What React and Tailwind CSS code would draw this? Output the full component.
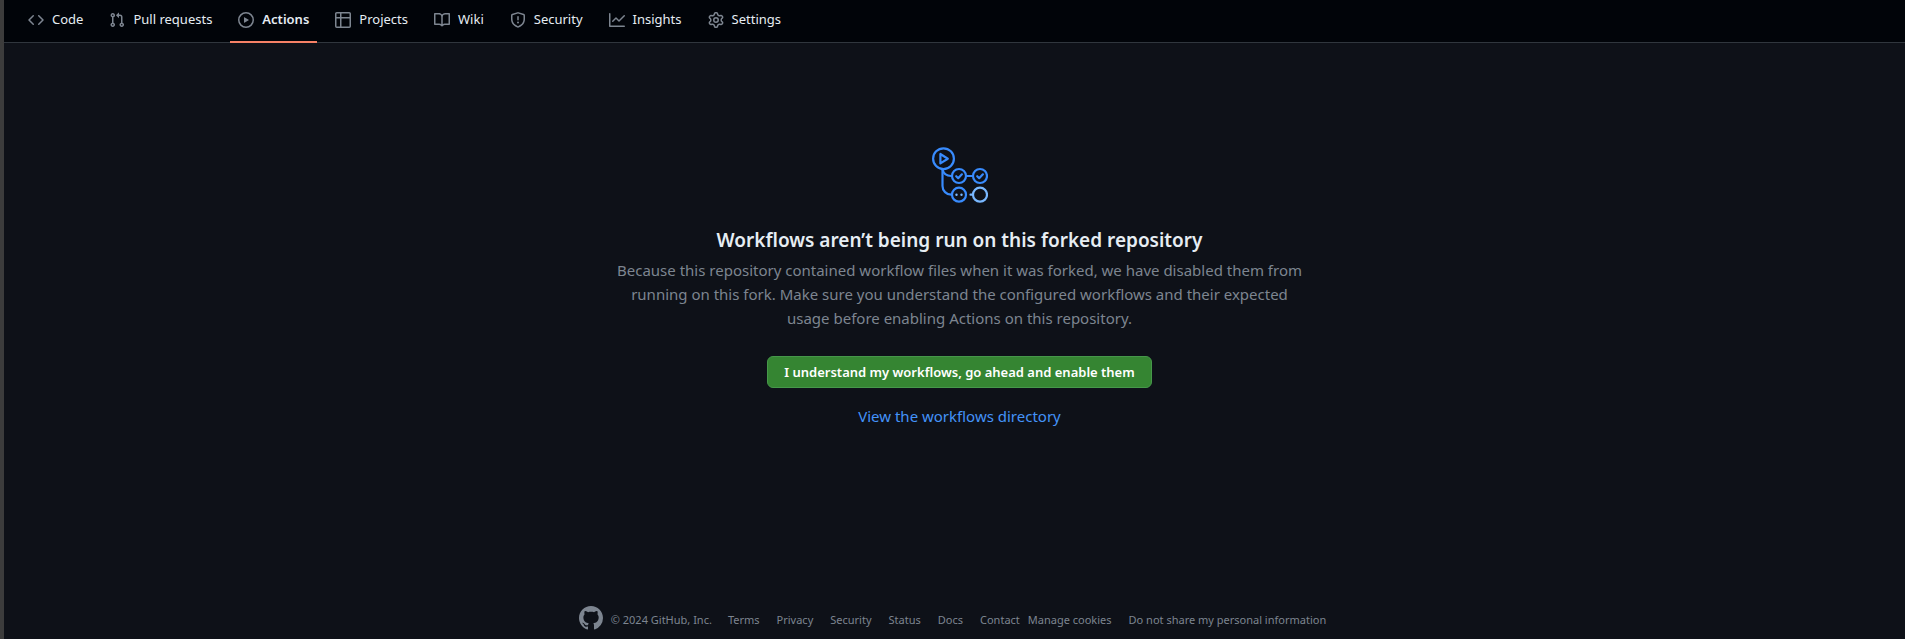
const NAV = [
  { label: "Code", d: "m11.28 3.22 4.25 4.25a.75.75 0 0 1 0 1.06l-4.25 4.25a.749.749 0 0 1-1.275-.326.749.749 0 0 1 .215-.734L13.94 8l-3.72-3.72a.749.749 0 0 1 .326-1.275.749.749 0 0 1 .734.215Zm-6.56 0a.751.751 0 0 1 1.042.018.751.751 0 0 1 .018 1.042L2.06 8l3.72 3.72a.749.749 0 0 1-.326 1.275.749.749 0 0 1-.734-.215L.47 8.53a.75.75 0 0 1 0-1.06Z" },
  { label: "Pull requests", d: "M1.5 3.25a2.25 2.25 0 1 1 3 2.122v5.256a2.251 2.251 0 1 1-1.5 0V5.372A2.25 2.25 0 0 1 1.5 3.25Zm5.677-.177L9.573.677A.25.25 0 0 1 10 .854V2.5h1A2.5 2.5 0 0 1 13.5 5v5.628a2.251 2.251 0 1 1-1.5 0V5a1 1 0 0 0-1-1h-1v1.646a.25.25 0 0 1-.427.177L7.177 3.427a.25.25 0 0 1 0-.354ZM3.75 2.5a.75.75 0 1 0 0 1.5.75.75 0 0 0 0-1.5Zm0 9.5a.75.75 0 1 0 0 1.5.75.75 0 0 0 0-1.5Zm8.25.75a.75.75 0 1 0 1.5 0 .75.75 0 0 0-1.5 0Z" },
  { label: "Actions", active: true, d: "M8 0a8 8 0 1 1 0 16A8 8 0 0 1 8 0ZM1.5 8a6.5 6.5 0 1 0 13 0 6.5 6.5 0 0 0-13 0Zm4.879-2.773 4.264 2.559a.25.25 0 0 1 0 .428l-4.264 2.559A.25.25 0 0 1 6 10.559V5.442a.25.25 0 0 1 .379-.215Z" },
  { label: "Projects", d: "M0 1.75C0 .784.784 0 1.75 0h12.5C15.216 0 16 .784 16 1.75v12.5A1.75 1.75 0 0 1 14.25 16H1.75A1.75 1.75 0 0 1 0 14.25ZM6.5 6.5v8h7.75a.25.25 0 0 0 .25-.25V6.5Zm8-1.5V1.75a.25.25 0 0 0-.25-.25H6.5V5Zm-13 1.5v7.75c0 .138.112.25.25.25H5v-8ZM5 5V1.5H1.75a.25.25 0 0 0-.25.25V5Z" },
  { label: "Wiki", d: "M0 1.75A.75.75 0 0 1 .75 1h4.253c1.227 0 2.317.59 3 1.501A3.743 3.743 0 0 1 11.006 1h4.245a.75.75 0 0 1 .75.75v10.5a.75.75 0 0 1-.75.75h-4.507a2.25 2.25 0 0 0-1.591.659l-.622.621a.75.75 0 0 1-1.06 0l-.622-.621A2.25 2.25 0 0 0 5.258 13H.75a.75.75 0 0 1-.75-.75Zm7.251 10.324.004-5.073-.002-2.253A2.25 2.25 0 0 0 5.003 2.5H1.5v9h3.757a3.75 3.75 0 0 1 1.994.574ZM8.755 4.75l-.004 7.322a3.752 3.752 0 0 1 1.992-.572H14.5v-9h-3.495a2.25 2.25 0 0 0-2.25 2.25Z" },
  { label: "Security", d: "M7.467.133a1.748 1.748 0 0 1 1.066 0l5.25 1.68A1.75 1.75 0 0 1 15 3.48V7c0 1.566-.32 3.182-1.303 4.682-.983 1.498-2.585 2.813-5.032 3.855a1.697 1.697 0 0 1-1.33 0c-2.447-1.042-4.049-2.357-5.032-3.855C1.32 10.182 1 8.566 1 7V3.48a1.75 1.75 0 0 1 1.217-1.667Zm.61 1.429a.25.25 0 0 0-.153 0l-5.25 1.68a.25.25 0 0 0-.174.238V7c0 1.358.275 2.666 1.057 3.86.784 1.194 2.121 2.34 4.366 3.297a.196.196 0 0 0 .154 0c2.245-.956 3.582-2.104 4.366-3.298C13.225 9.666 13.5 8.36 13.5 7V3.48a.251.251 0 0 0-.174-.237l-5.25-1.68ZM8.75 4.75v3a.75.75 0 0 1-1.5 0v-3a.75.75 0 0 1 1.5 0ZM9 10.5a1 1 0 1 1-2 0 1 1 0 0 1 2 0Z" },
  { label: "Insights", d: "M1.5 1.75V13.5h13.75a.75.75 0 0 1 0 1.5H.75a.75.75 0 0 1-.75-.75V1.75a.75.75 0 0 1 1.5 0Zm14.28 2.53-5.25 5.25a.75.75 0 0 1-1.06 0L7 7.06 4.28 9.78a.751.751 0 0 1-1.042-.018.751.751 0 0 1-.018-1.042l3.25-3.25a.75.75 0 0 1 1.06 0L10 7.94l4.72-4.72a.751.751 0 0 1 1.042.018.751.751 0 0 1 .018 1.042Z" },
  { label: "Settings", d: "M8 0a8.2 8.2 0 0 1 .701.031C9.444.095 9.99.645 10.16 1.29l.288 1.107c.018.066.079.158.212.224.231.114.454.243.668.386.123.082.233.09.299.071l1.103-.303c.644-.176 1.392.021 1.82.63.27.385.506.792.704 1.218.315.675.111 1.422-.364 1.891l-.814.806c-.049.048-.098.147-.088.294.016.257.016.515 0 .772-.01.147.038.246.088.294l.814.806c.475.469.679 1.216.364 1.891a7.977 7.977 0 0 1-.704 1.217c-.428.61-1.176.807-1.82.63l-1.102-.302c-.067-.019-.177-.011-.3.071a5.909 5.909 0 0 1-.668.386c-.133.066-.194.158-.211.224l-.29 1.106c-.168.646-.715 1.196-1.458 1.26a8.006 8.006 0 0 1-1.402 0c-.743-.064-1.289-.614-1.458-1.26l-.289-1.106c-.018-.066-.079-.158-.212-.224a5.738 5.738 0 0 1-.668-.386c-.123-.082-.233-.09-.299-.071l-1.103.303c-.644.176-1.392-.021-1.82-.63a8.12 8.12 0 0 1-.704-1.218c-.315-.675-.111-1.422.363-1.891l.815-.806c.05-.048.098-.147.088-.294a6.214 6.214 0 0 1 0-.772c.01-.147-.038-.246-.088-.294l-.815-.806C.635 6.045.431 5.298.746 4.623a7.92 7.92 0 0 1 .704-1.217c.428-.61 1.176-.807 1.82-.63l1.102.302c.067.019.177.011.3-.071.214-.143.437-.272.668-.386.133-.066.194-.158.211-.224l.29-1.106C6.009.645 6.556.095 7.299.03 7.53.01 7.764 0 8 0Zm-.571 1.525c-.036.003-.108.036-.137.146l-.289 1.105c-.147.561-.549.967-.998 1.189-.173.086-.34.183-.5.29-.417.278-.97.423-1.529.27l-1.103-.303c-.109-.03-.175.016-.195.045-.22.312-.412.644-.573.99-.014.031-.021.11.059.19l.815.806c.411.406.562.957.53 1.456a4.709 4.709 0 0 0 0 .582c.032.499-.119 1.05-.53 1.456l-.815.806c-.081.08-.073.159-.059.19.162.346.353.677.573.989.02.03.085.076.195.046l1.102-.303c.56-.153 1.113-.008 1.53.27.161.107.328.204.501.29.447.222.85.629.997 1.189l.289 1.105c.029.109.101.143.137.146a6.6 6.6 0 0 0 1.142 0c.036-.003.108-.036.137-.146l.289-1.105c.147-.561.549-.967.998-1.189.173-.086.34-.183.5-.29.417-.278.97-.423 1.529-.27l1.103.303c.109.029.175-.016.195-.045.22-.313.411-.644.573-.99.014-.031.021-.11-.059-.19l-.815-.806c-.411-.406-.562-.957-.53-1.456a4.709 4.709 0 0 0 0-.582c-.032-.499.119-1.05.53-1.456l.815-.806c.081-.08.073-.159.059-.19a6.464 6.464 0 0 0-.573-.989c-.02-.03-.085-.076-.195-.046l-1.102.303c-.56.153-1.113.008-1.53-.27a4.44 4.44 0 0 0-.501-.29c-.447-.222-.85-.629-.997-1.189l-.289-1.105c-.029-.11-.101-.143-.137-.146a6.6 6.6 0 0 0-1.142 0ZM11 8a3 3 0 1 1-6 0 3 3 0 0 1 6 0ZM9.5 8a1.5 1.5 0 1 0-3.001.001A1.5 1.5 0 0 0 9.5 8Z" },
];

const MARK = "M8 0C3.58 0 0 3.58 0 8c0 3.54 2.29 6.53 5.47 7.59.4.07.55-.17.55-.38 0-.19-.01-.82-.01-1.49-2.01.37-2.53-.49-2.69-.94-.09-.23-.48-.94-.82-1.13-.28-.15-.68-.52-.01-.53.63-.01 1.08.58 1.23.82.72 1.21 1.87.87 2.33.66.07-.52.28-.87.51-1.07-1.78-.2-3.64-.89-3.64-3.95 0-.87.31-1.59.82-2.15-.08-.2-.36-1.02.08-2.12 0 0 .67-.21 2.2.82.64-.18 1.32-.27 2-.27.68 0 1.36.09 2 .27 1.53-1.04 2.2-.82 2.2-.82.44 1.1.16 1.92.08 2.12.51.56.82 1.27.82 2.15 0 3.07-1.87 3.75-3.65 3.95.29.25.54.73.54 1.48 0 1.07-.01 1.93-.01 2.2 0 .21.15.46.55.38A8.013 8.013 0 0 0 16 8c0-4.42-3.58-8-8-8z";

function Octicon({ d, className }) {
  return (
    <svg viewBox="0 0 16 16" fill="currentColor" aria-hidden="true" className={className}>
      <path d={d} />
    </svg>
  );
}

function RepoNav() {
  return (
    <header className="border-b border-[#30363d] bg-[#010409] px-4">
      <nav aria-label="Repository">
        <ul className="flex gap-2.5">
          {NAV.map((item) => (
            <li key={item.label} className={item.active ? "-mb-px border-b-2 border-[#f78166]" : ""}>
              <a
                href="#"
                aria-current={item.active ? "page" : undefined}
                className={
                  item.active
                    ? "flex items-center gap-2 px-2 pt-2 pb-2.5 text-[13px] leading-[23px] font-semibold text-[#e6edf3]"
                    : "flex items-center gap-2 px-2 pt-2 pb-2.5 text-[13px] leading-[23px] text-[#e6edf3]"
                }
              >
                <Octicon d={item.d} className="size-4 shrink-0 text-[#7d8590]" />
                {item.label}
              </a>
            </li>
          ))}
        </ul>
      </nav>
    </header>
  );
}

function ActionsGraphic() {
  return (
    <svg viewBox="0 0 56 56" fill="none" strokeWidth="2.2" strokeLinecap="round" strokeLinejoin="round" aria-hidden="true" className="size-14">
      <g stroke="#388bfd">
        <circle cx="11.5" cy="11.7" r="10.4" />
        <path d="M8.4 7v9.400l7.400-4.700Z" />
        <path d="M10.5 22.5V39a8.7 8.7 0 0 0 8.7 8.7" />
        <path d="M10.5 22.5c1 4 3.700 6.500 8.700 6.500M35 29h5.500" />
        <circle cx="27" cy="29" r="7" />
        <circle cx="48" cy="29" r="7" />
        <circle cx="27" cy="47.7" r="7" />
        <path d="m24.200 29.200 2 2 3.700-3.900M45.200 29.200l2 2 3.700-3.900" />
      </g>
      <g fill="#79b8ff">
        <circle cx="24.500" cy="47.700" r="1.200" />
        <circle cx="29.500" cy="47.700" r="1.200" />
      </g>
      <g stroke="#79b8ff">
        <path d="M38.500 47.700H41" />
        <circle cx="48" cy="47.700" r="7" />
      </g>
    </svg>
  );
}

function FooterLink({ children }) {
  return <a href="#">{children}</a>;
}

export default function App() {
  return (
    <div className="flex min-h-screen flex-col border-l-4 border-[#3c3c3c] bg-[#0e1118] font-['Noto_Sans','Open_Sans',sans-serif]">
      <RepoNav />
      <main className="flex flex-1 flex-col items-center pt-26 pl-2.5 text-center">
        <ActionsGraphic />
        <h1 className="mt-5 text-[19px] leading-[34px] font-semibold text-[#e6edf3]">
          Workflows aren’t being run on this forked repository
        </h1>
        <p className="mt-px max-w-[696px] text-[15px] leading-6 text-[#7d8590]">
          Because this repository contained workflow files when it was forked, we have disabled them from running on
          this fork. Make sure you understand the configured workflows and their expected usage before enabling
          Actions on this repository.
        </p>
        <button
          type="button"
          className="mt-[26px] h-8 rounded-md border border-[#46974a] bg-[#358532] px-4 text-[13px] leading-5 font-semibold text-white"
        >
          I understand my workflows, go ahead and enable them
        </button>
        <a href="#" className="mt-4 text-[15px] leading-6 text-[#4493f8]">
          View the workflows directory
        </a>
      </main>
      <footer className="flex items-start justify-center gap-2 pr-1 pb-[5px] text-[11px] leading-7 text-[#7d8590]">
        <a href="#" aria-label="GitHub">
          <Octicon d={MARK} className="size-6" />
        </a>
        <span>© 2024 GitHub, Inc.</span>
        <nav aria-label="Footer" className="flex items-center gap-[17px] pl-2">
          <FooterLink>Terms</FooterLink>
          <FooterLink>Privacy</FooterLink>
          <FooterLink>Security</FooterLink>
          <FooterLink>Status</FooterLink>
          <FooterLink>Docs</FooterLink>
          <span className="flex gap-2">
            <FooterLink>Contact</FooterLink>
            <button type="button">Manage cookies</button>
          </span>
          <button type="button">Do not share my personal information</button>
        </nav>
      </footer>
    </div>
  );
}
